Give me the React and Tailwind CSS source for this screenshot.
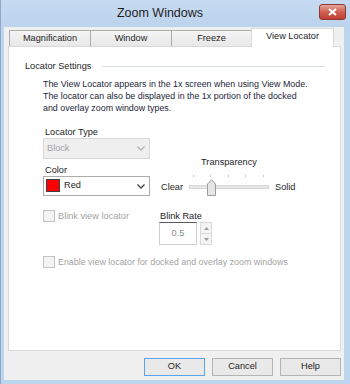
import React from 'react';

function Chevron({ color = '#404040' }) {
  return (
    <svg width="8" height="5" viewBox="0 0 8 5">
      <polyline points="0.5,0.5 4,4 7.5,0.5" fill="none" stroke={color} strokeWidth="1.3" />
    </svg>
  );
}

function CheckBox({ label }) {
  return (
    <div className="flex items-center">
      <div className="w-[12px] h-[12px] border border-[#c3c3c3] bg-[#f3f3f3]" />
      <span className="ml-[3px] text-[#a3a3a3] leading-[12px]">{label}</span>
    </div>
  );
}

function Tab({ label, width, active }) {
  if (active) {
    return (
      <div
        className={`${width} h-[19px] -ml-px -mb-px z-10 bg-white border border-b-0 border-[#d9d9d9] flex items-center justify-center pb-[2px] text-[#1e1e1e]`}
      >
        {label}
      </div>
    );
  }
  return (
    <div
      className={`${width} h-[16px] -ml-px first:ml-0 bg-gradient-to-b from-[#f4f4f4] to-[#e8e8e8] border border-b-0 border-[#acacac] flex items-center justify-center text-[#1e1e1e]`}
    >
      {label}
    </div>
  );
}

function Button({ label, primary }) {
  return (
    <div
      className={`w-[61px] h-[18px] flex items-center justify-center border bg-[#e9e9e9] text-[#1e1e1e] ${
        primary ? 'border-[#5aa3e8]' : 'border-[#b4b4b4]'
      }`}
    >
      {label}
    </div>
  );
}

export default function App() {
  const ticks = [4, 21, 39, 56, 74];

  return (
    <div className="w-[350px] h-[384px] flex flex-col bg-[#bed5ee] border-l border-[#8ea9c8] font-['Liberation_Sans',Arial,sans-serif] text-[9.2px] text-[#1e1e1e] overflow-hidden">
      {/* Title bar */}
      <div className="h-[27px] flex items-start shrink-0 bg-gradient-to-b from-[#c6dbf1] to-[#bcd3ec]">
        <div className="flex-1 text-center text-[12.5px] leading-[15px] pt-[6px] text-[#1e1e1e]">
          Zoom Windows
        </div>
        <div className="mt-[4px] mr-[4px] w-[27px] h-[16px] rounded-[3px] border border-[#8c3a33] bg-gradient-to-b from-[#e5a59b] via-[#cf5e52] to-[#c23e31] flex items-center justify-center">
          <svg width="9" height="8" viewBox="0 0 9 8">
            <path d="M1 1 L8 7 M8 1 L1 7" stroke="#ffffff" strokeWidth="2" />
          </svg>
        </div>
      </div>

      {/* Client area */}
      <div className="h-[353px] ml-[3px] mr-[6px] bg-[#f0f0f0] flex flex-col pt-[1px]">
        {/* Tabs */}
        <div className="h-[18px] flex items-end pl-[5px]">
          <Tab label="Magnification" width="w-[82px]" />
          <Tab label="Window" width="w-[82px]" />
          <Tab label="Freeze" width="w-[81px]" />
          <Tab label="View Locator" width="w-[83px]" active />
        </div>

        {/* Panel */}
        <div className="h-[305px] ml-[4px] mr-[3px] bg-white border border-[#d9d9d9]">
          <div className="mt-[13px] ml-[16px] mr-[15px] flex items-center justify-between leading-[12px]">
            <span>Locator Settings</span>
            <div className="w-[223px] h-px bg-[#d5dfe5]" />
          </div>

          <p className="mt-[6px] ml-[34px] leading-[12px] whitespace-nowrap text-[#1c2638] text-[8.9px]">
            The View Locator appears in the 1x screen when using View Mode.
            <br />
            The locator can also be displayed in the 1x portion of the docked
            <br />
            and overlay zoom window types.
          </p>

          <div className="mt-[13px] ml-[34px] flex">
            {/* Left column */}
            <div className="w-[107px] flex flex-col">
              <div className="ml-[2px] leading-[11px]">Locator Type</div>
              <div className="h-[21px] border border-[#d9d9d9] bg-[#efefef] flex items-center justify-between pl-[3px] pr-[4px] text-[#a3a3a3]">
                <span>Block</span>
                <Chevron color="#b5b5b5" />
              </div>
              <div className="mt-[6px] ml-[2px] leading-[11px]">Color</div>
              <div className="h-[20px] border border-[#acacac] bg-white flex items-center justify-between pl-[2px] pr-[4px]">
                <div className="flex items-center">
                  <div className="w-[14px] h-[13px] bg-[#ff0000] border border-[#404040]" />
                  <span className="ml-[4px]">Red</span>
                </div>
                <Chevron />
              </div>
            </div>

            {/* Right column: slider */}
            <div className="ml-[11px] pt-[30px] grid grid-cols-[28px_80px_auto] items-center">
              <div />
              <div className="text-center leading-[11px]">Transparency</div>
              <div />
              <div className="col-span-3 h-[9px]" />
              <div className="leading-[11px]">Clear</div>
              <div className="relative h-[17px] flex items-center">
                <div className="w-full h-[4px] bg-[#e7e7e7] border border-[#d6d6d6]" />
                {ticks.map((x) => (
                  <div key={x} className="absolute top-[-4px] w-px h-[2px] bg-[#c4c4c4]" style={{ left: x }} />
                ))}
                <svg className="absolute left-[18px] top-0" width="9" height="17" viewBox="0 0 9 17">
                  <path d="M0.5 5 L4.5 0.8 L8.5 5 V16.5 H0.5 Z" fill="#e6e6e6" stroke="#9c9c9c" />
                </svg>
              </div>
              <div className="pl-[6px] leading-[11px]">Solid</div>
            </div>
          </div>

          {/* Blink row */}
          <div className="mt-[14px] ml-[34px] flex items-start">
            <div className="w-[116px]">
              <CheckBox label="Blink view locator" />
            </div>
            <div className="flex flex-col">
              <div className="mt-[1px] ml-[1px] leading-[11px] text-[#1e1e1e]">Blink Rate</div>
              <div className="flex">
                <div className="w-[38px] h-[23px] border border-[#cfcfcf] border-t-[#5a5a5a] flex items-center justify-center text-[#8a8a8a]">
                  0.5
                </div>
                <div className="ml-[3px] w-[12px] h-[23px] flex flex-col">
                  <div className="h-[12px] border border-[#dadada] bg-[#f4f4f4] flex items-center justify-center">
                    <svg width="5" height="3" viewBox="0 0 5 3">
                      <path d="M0 3 L2.5 0 L5 3 Z" fill="#9a9a9a" />
                    </svg>
                  </div>
                  <div className="h-[11px] border border-t-0 border-[#dadada] bg-[#f4f4f4] flex items-center justify-center">
                    <svg width="5" height="3" viewBox="0 0 5 3">
                      <path d="M0 0 L2.5 3 L5 0 Z" fill="#9a9a9a" />
                    </svg>
                  </div>
                </div>
              </div>
            </div>
          </div>

          <div className="mt-[11px] ml-[34px] text-[8.9px]">
            <CheckBox label="Enable view locator for docked and overlay zoom windows" />
          </div>
        </div>

        {/* Buttons */}
        <div className="mt-[7px] pr-[3px] flex justify-end gap-[7px]">
          <Button label="OK" primary />
          <Button label="Cancel" />
          <Button label="Help" />
        </div>
      </div>
    </div>
  );
}
